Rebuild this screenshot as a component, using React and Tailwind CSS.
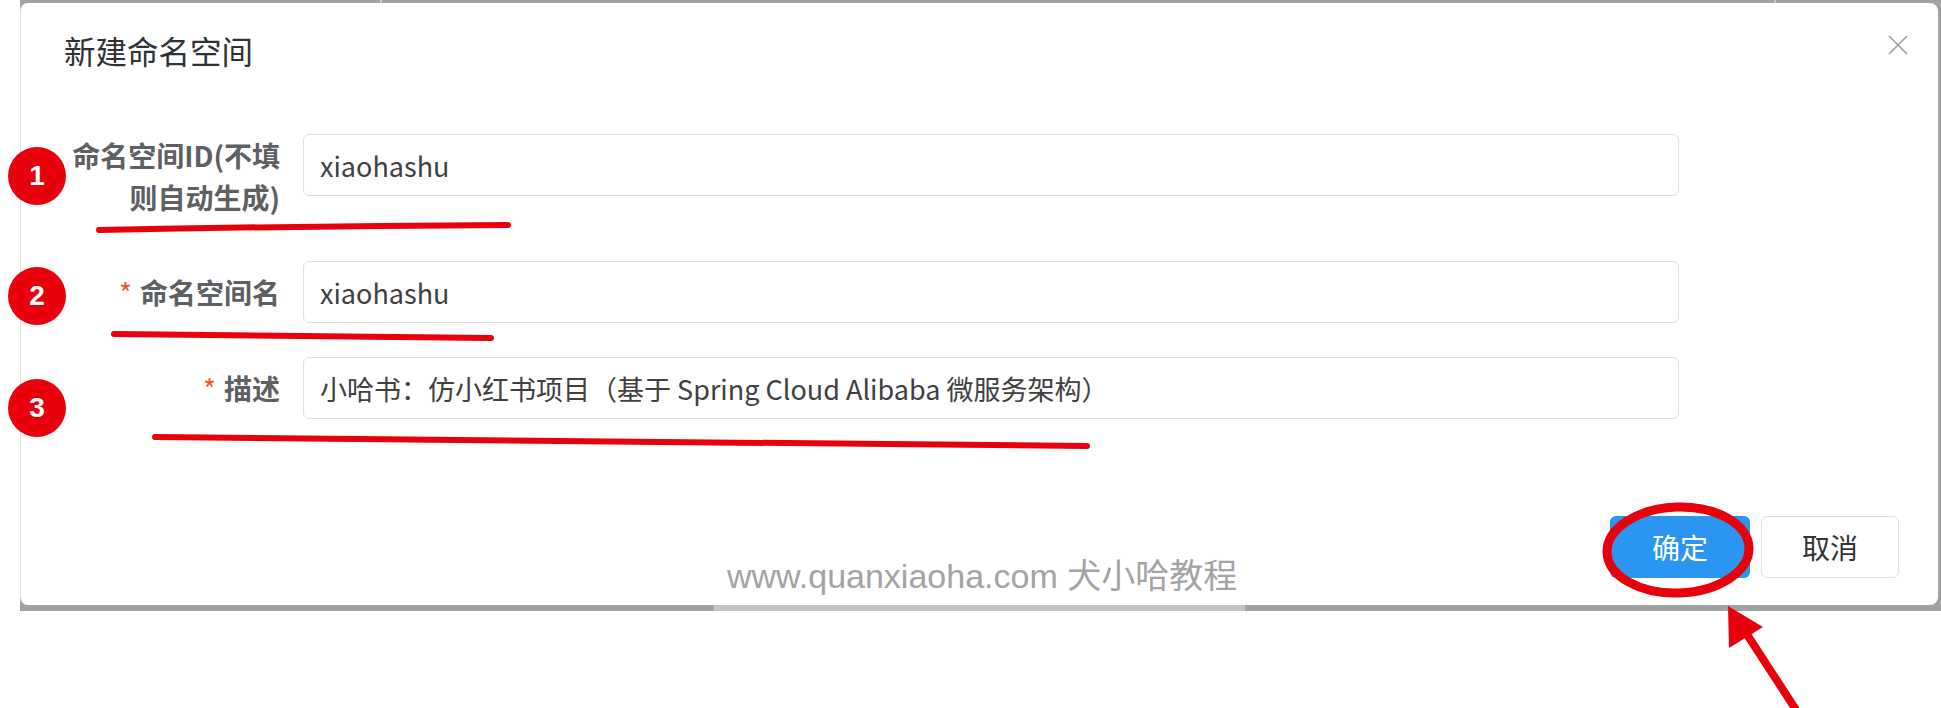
import React from 'react'

const FONT = { fontFamily: '"Noto Sans CJK SC", "Noto Sans", sans-serif' }

const FIELDS = [
  { label: '命名空间ID(不填则自动生成)', value: 'xiaohashu', required: false, mb: 'mb-[43px]' },
  { label: '命名空间名', value: 'xiaohashu', required: true, mb: 'mb-[34px]' },
  { label: '描述', value: '小哈书：仿小红书项目（基于 Spring Cloud Alibaba 微服务架构）', required: true, mb: '' },
]

const BADGES = [
  { n: '1', cls: 'top-[147px]' },
  { n: '2', cls: 'top-[267px]' },
  { n: '3', cls: 'top-[379px]' },
]

function FormItem({ label, value, required, mb }) {
  const wrap = !required
  return (
    <div className={`flex items-start ${mb}`}>
      <label
        className={`w-[216px] shrink-0 text-right text-[28px] font-bold text-[#5e5f62] ${
          wrap ? 'leading-[42px]' : 'leading-[62px]'
        }`}
      >
        {required && <span className="mr-[8px] font-normal text-[#f0562d]">*</span>}
        {label}
      </label>
      <div className="ml-[23px] flex h-[62px] w-[1376px] items-center rounded-[6px] border border-[#dcdfe6] bg-white px-[16px]">
        <span className="text-[27px] leading-none text-[#404040] whitespace-nowrap">{value}</span>
      </div>
    </div>
  )
}

export default function App() {
  return (
    <div className="relative h-[708px] w-[1941px] overflow-hidden bg-white" style={FONT}>
      <div className="ml-[20px] flex w-[1921px] flex-col bg-[#a2a2a2]">
        <div className="flex h-[3px]">
          <div className="ml-[360px] w-[2px] bg-[#c9c9c9]" />
          <div className="ml-[1392px] w-[2px] bg-[#c9c9c9]" />
        </div>
        <div className="mr-[3px] flex h-[602px] flex-col rounded-[8px] border-l border-[#e2e2e2] bg-white">
          {/* header */}
          <div className="flex items-start justify-between pl-[43px] pr-[30px] pt-[25px]">
            <h2 className="text-[31.5px] leading-[44px] font-normal text-[#303133]">新建命名空间</h2>
            <svg className="mt-[7px]" width="20" height="20" viewBox="0 0 20 20">
              <path d="M1 1 L19 19 M19 1 L1 19" stroke="#9a9a9a" strokeWidth="1.6" fill="none" />
            </svg>
          </div>

          {/* form */}
          <div className="mt-[62px] pl-[43px]">
            {FIELDS.map((f) => (
              <FormItem key={f.label} {...f} />
            ))}
          </div>

          {/* footer */}
          <div className="mt-[97px] flex justify-end gap-[11px] pr-[39px]">
            <button className="h-[62px] w-[140px] rounded-[6px] bg-[#2b95f2] text-[28px] text-white">确定</button>
            <button className="h-[62px] w-[138px] rounded-[6px] border border-[#dcdfe6] bg-white text-[28px] text-[#333]">
              取消
            </button>
          </div>
        </div>
        <div className="flex h-[6px]">
          <div className="ml-[694px] w-[531px] bg-[#c2c2c2]" />
        </div>
      </div>

      {/* watermark */}
      <div
        className="absolute left-[727px] top-[556px] text-[34px] leading-[40px] text-[#a3a3a3] whitespace-nowrap"
        style={{ fontFamily: '"Liberation Sans", "Noto Sans CJK SC", sans-serif' }}
      >
        www.quanxiaoha.com 犬小哈教程
      </div>

      {/* numbered badges */}
      {BADGES.map((b) => (
        <div
          key={b.n}
          className={`absolute left-[8px] ${b.cls} flex h-[58px] w-[58px] items-center justify-center rounded-full bg-[#e8000d] text-[28px] font-bold text-white`}
          style={{ fontFamily: '"Liberation Sans", Arial, sans-serif' }}
        >
          {b.n}
        </div>
      ))}

      {/* hand-drawn marks */}
      <svg className="pointer-events-none absolute left-0 top-0" width="1941" height="708">
        <g stroke="#e8000d" strokeLinecap="round" fill="none">
          <path d="M99 230 Q300 226 508 225" strokeWidth="6" />
          <path d="M114 334 Q300 336 491 338" strokeWidth="6" />
          <path d="M155 437 Q600 440 1087 446" strokeWidth="6" />
          <ellipse cx="1678" cy="550" rx="71" ry="43" strokeWidth="9" transform="rotate(-2 1678 550)" />
          <path d="M1748 636 L1800 716" strokeWidth="8" />
        </g>
        <polygon points="1728,606 1729,648 1763,627" fill="#e8000d" />
      </svg>
    </div>
  )
}
